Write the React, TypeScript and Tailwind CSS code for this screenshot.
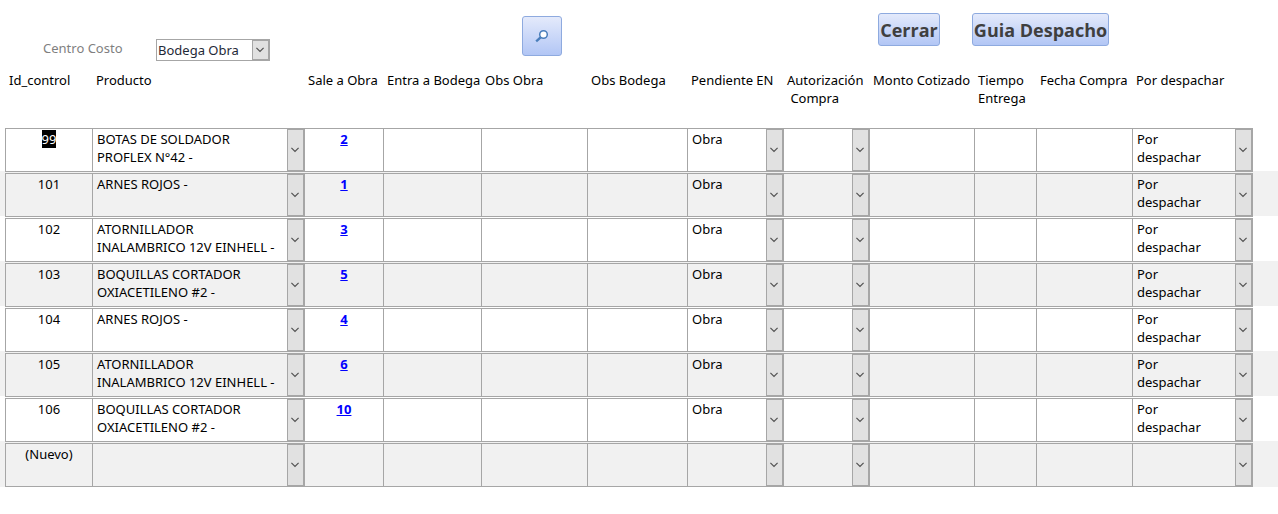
import { useEffect, useRef, useState } from 'react'

type Row = {
  id: string
  producto: string
  sale: string
  pendiente: string
  despacho: string
}

const PRODUCTOS = [
  '',
  'BOTAS DE SOLDADOR PROFLEX N°42 -',
  'ARNES ROJOS -',
  'ATORNILLADOR INALAMBRICO 12V EINHELL -',
  'BOQUILLAS CORTADOR OXIACETILENO #2 -',
]
const LUGARES = ['', 'Obra', 'Bodega']
const AUTORIZACION = ['', 'Si', 'No']
const DESPACHO = ['', 'Por despachar', 'Despachado']

const makeRow = (id: string, producto: number, sale: string): Row => ({
  id,
  producto: PRODUCTOS[producto],
  sale,
  pendiente: 'Obra',
  despacho: 'Por despachar',
})

const rows: Row[] = [
  makeRow('99', 1, '2'),
  makeRow('101', 2, '1'),
  makeRow('102', 3, '3'),
  makeRow('103', 4, '5'),
  makeRow('104', 2, '4'),
  makeRow('105', 3, '6'),
  makeRow('106', 4, '10'),
  { id: '(Nuevo)', producto: '', sale: '', pendiente: '', despacho: '' },
]

const columns = [
  { label: 'Id_control', width: 'w-[87px]' },
  { label: 'Producto', width: 'w-[212px]' },
  { label: 'Sale a Obra', width: 'w-[79px]' },
  { label: 'Entra a Bodega', width: 'w-[98px]' },
  { label: 'Obs Obra', width: 'w-[106px]' },
  { label: 'Obs Bodega', width: 'w-[100px]' },
  { label: 'Pendiente EN', width: 'w-[96px]' },
  { label: 'Autorización\n Compra', width: 'w-[86px]' },
  { label: 'Monto Cotizado', width: 'w-[105px]' },
  { label: 'Tiempo\nEntrega', width: 'w-[62px]' },
  { label: 'Fecha Compra', width: 'w-[96px]' },
  { label: 'Por despachar', width: 'w-[121px]' },
]

function Chevron() {
  return (
    <span className="pointer-events-none flex w-[17px] shrink-0 items-center justify-center border border-[#a6a6a6] bg-[#e1e1e1] pr-px">
      <svg width="8" height="6" viewBox="0 0 8 6" fill="none" stroke="#505050" strokeWidth="1.2">
        <path d="M0.4 0.8 L4 4.4 L7.6 0.8" />
      </svg>
    </span>
  )
}

// Long values wrap on two lines, which a native select can't do,
// so the value is drawn on top of it
function ComboCell({ label, initial, options }: { label: string; initial: string; options: string[] }) {
  const [value, setValue] = useState(initial)

  return (
    <div className="grid h-full">
      <select
        aria-label={label}
        value={value}
        onChange={(e) => setValue(e.target.value)}
        className="col-start-1 row-start-1 h-full w-full appearance-none bg-transparent text-transparent outline-none"
      >
        {options.map((o) => (
          <option key={o} value={o} className="text-black">
            {o}
          </option>
        ))}
      </select>
      <div aria-hidden="true" className="pointer-events-none col-start-1 row-start-1 flex">
        <span className="min-w-0 flex-1 pt-px pr-3 pl-1">{value}</span>
        <Chevron />
      </div>
    </div>
  )
}

function TextCell({ label }: { label: string }) {
  return <input type="text" aria-label={label} className="block h-full w-full bg-transparent px-1 outline-none" />
}

function IdCell({ id, selected }: { id: string; selected: boolean }) {
  const ref = useRef<HTMLInputElement>(null)

  useEffect(() => {
    if (selected) ref.current?.select()
  }, [selected])

  return (
    <input
      ref={ref}
      type="text"
      readOnly
      aria-label="Id_control"
      value={id}
      className="mt-px block h-[18px] w-full bg-transparent text-center outline-none selection:bg-black selection:text-white"
    />
  )
}

function RecordRow({ row, index }: { row: Row; index: number }) {
  const first = index === 0
  const last = index === rows.length - 1

  const cells = [
    <IdCell id={row.id} selected={first} />,
    <ComboCell label="Producto" initial={row.producto} options={PRODUCTOS} />,
    <div className="pt-px text-center">
      {row.sale && (
        <a href="#detalle" className="font-bold text-[#0000ff] underline">
          {row.sale}
        </a>
      )}
    </div>,
    <TextCell label="Entra a Bodega" />,
    <TextCell label="Obs Obra" />,
    <TextCell label="Obs Bodega" />,
    <ComboCell label="Pendiente EN" initial={row.pendiente} options={LUGARES} />,
    <ComboCell label="Autorización Compra" initial="" options={AUTORIZACION} />,
    <TextCell label="Monto Cotizado" />,
    <TextCell label="Tiempo Entrega" />,
    <TextCell label="Fecha Compra" />,
    <ComboCell label="Por despachar" initial={row.despacho} options={DESPACHO} />,
  ]

  return (
    <tr className={index % 2 ? 'bg-[#f1f1f1]' : 'bg-white'}>
      <td className="p-0" />
      {cells.map((cell, i) => (
        <td
          key={i}
          className={`border-[#a6a6a6] p-0 align-top ${first ? 'pt-px' : 'border-t'} ${last ? 'border-b' : ''}`}
        >
          <div
            className={`mt-px h-[43px] border-t border-l border-[#a6a6a6] ${i === cells.length - 1 ? 'border-r' : ''}`}
          >
            {cell}
          </div>
        </td>
      ))}
      <td className="p-0" />
    </tr>
  )
}

export default function App() {
  return (
    <main className="min-h-screen bg-white font-['Noto_Sans','Open_Sans',sans-serif] text-[13px] leading-[18px] text-black">
      <header className="flex items-start pt-[13px] pl-[43px]">
        <div className="mt-[26px] flex">
          <label htmlFor="centro" className="w-[113px] text-[#7f7f7f]">
            Centro Costo
          </label>
          <div className="grid h-[22px] w-[114px] border border-[#a6a6a6]">
            <select
              id="centro"
              defaultValue="Bodega Obra"
              className="col-start-1 row-start-1 appearance-none pl-px text-[#1f2937] outline-none"
            >
              <option>Bodega Obra</option>
              <option>Bodega Central</option>
            </select>
            <div className="pointer-events-none col-start-1 row-start-1 flex justify-end">
              <Chevron />
            </div>
          </div>
        </div>

        <button
          type="button"
          aria-label="Buscar"
          className="mt-[3px] ml-[252px] flex size-10 items-center justify-center rounded-[3px] border border-[#8eaadf] bg-linear-to-b from-[#e4eafb] to-[#b2c6f5]"
        >
          <svg width="14" height="14" viewBox="0 0 14 14" fill="none" stroke="#4a7ebb">
            <circle cx="8.5" cy="5.5" r="3.8" fill="#fff" strokeWidth="1.5" />
            <path d="M5.6 8.4 L1.2 12.4" strokeWidth="2.4" />
          </svg>
        </button>

        <button
          type="button"
          className="ml-[316px] h-[33px] w-[62px] rounded-[3px] border border-[#8eaadf] bg-linear-to-b from-[#e4eafb] to-[#b2c6f5] font-['Open_Sans',sans-serif] text-[18px] font-bold whitespace-nowrap text-[#3f3f3f]"
        >
          Cerrar
        </button>
        <button
          type="button"
          className="ml-8 h-[33px] w-[137px] rounded-[3px] border border-[#8eaadf] bg-linear-to-b from-[#e4eafb] to-[#b2c6f5] font-['Open_Sans',sans-serif] text-[18px] font-bold whitespace-nowrap text-[#3f3f3f]"
        >
          Guia Despacho
        </button>
      </header>

      <table className="w-full table-fixed border-separate border-spacing-0">
        <colgroup>
          <col className="w-[5px]" />
          {columns.map((c) => (
            <col key={c.label} className={c.width} />
          ))}
          <col />
        </colgroup>
        <thead>
          <tr className="h-[65px]">
            <td className="p-0" />
            {columns.map((c) => (
              <th
                key={c.label}
                scope="col"
                className="px-1 pt-[10px] pb-0 text-left align-top font-normal whitespace-pre"
              >
                {c.label}
              </th>
            ))}
            <td className="p-0" />
          </tr>
        </thead>
        <tbody>
          {rows.map((row, i) => (
            <RecordRow key={row.id} row={row} index={i} />
          ))}
        </tbody>
      </table>
    </main>
  )
}
